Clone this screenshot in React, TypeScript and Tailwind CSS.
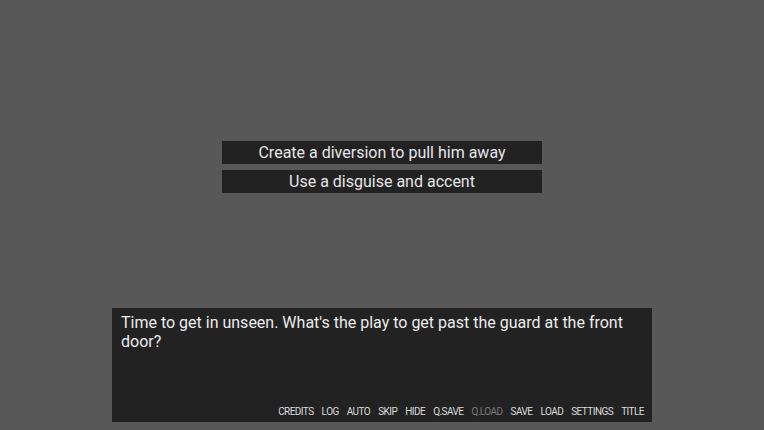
import React from "react";

const choices = ["Create a diversion to pull him away", "Use a disguise and accent"];
const menu = ["CREDITS", "LOG", "AUTO", "SKIP", "HIDE", "Q.SAVE", "Q.LOAD", "SAVE", "LOAD", "SETTINGS", "TITLE"];

export default function App() {
  return (
    <div
      className="w-[764px] h-[430px] overflow-hidden bg-[#585858] flex flex-col items-center pt-[141px]"
      style={{ fontFamily: "Roboto, 'Noto Sans', sans-serif" }}
    >
      <div className="flex flex-col gap-[6px]">
        {choices.map((c) => (
          <div
            key={c}
            className="w-[320px] h-[23px] bg-[#222222] text-[#e6e6e6] text-[16px] leading-[23px] text-center"
          >
            {c}
          </div>
        ))}
      </div>
      <div className="mt-[115px] w-[540px] h-[114px] bg-[#222222] flex flex-col justify-between pl-[9px] pr-[8px] pt-[5px] pb-[4px]">
        <p className="text-[#ececec] text-[16px] leading-[19px]">
          Time to get in unseen. What's the play to get past the guard at the front door?
        </p>
        <div className="flex justify-end gap-[8px] text-[10px] leading-[12px] tracking-[-0.55px]">
          {menu.map((m) => (
            <span key={m} className={m === "Q.LOAD" ? "text-[#7a7a7a]" : "text-[#dcdcdc]"}>
              {m}
            </span>
          ))}
        </div>
      </div>
    </div>
  );
}
